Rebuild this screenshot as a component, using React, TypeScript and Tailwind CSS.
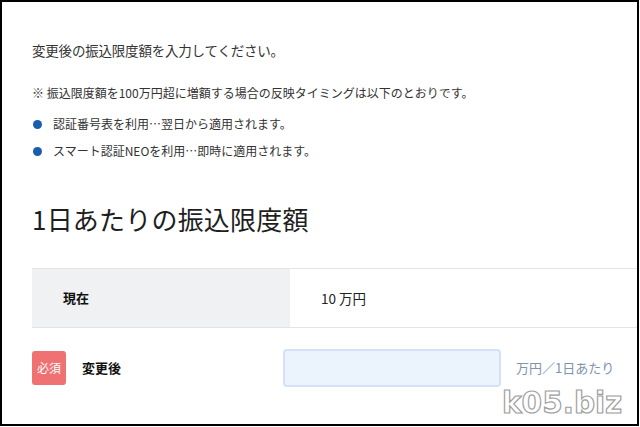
export default function App() {
  return (
    <div className="w-[640px] h-[427px] bg-white relative overflow-hidden" style={{ fontFamily: '"Noto Sans CJK JP", "Noto Sans", sans-serif' }}>
      <div className="w-[639px] h-[426px] border-2 border-black overflow-hidden">
        <div className="pl-[30px] pt-[38px] text-[#333]">
          {/* Intro */}
          <p className="text-[13.5px] leading-[20px] tracking-[-0.2px]">変更後の振込限度額を入力してください。</p>
          <p className="mt-[23px] text-[12px] leading-[20px]">※ 振込限度額を100万円超に増額する場合の反映タイミングは以下のとおりです。</p>
          <ul className="mt-[11px] flex flex-col gap-[7px] text-[12px] leading-[20px]">
            <li className="flex items-center">
              <span className="w-[9px] h-[9px] rounded-full bg-[#1a5cad] mr-[11px] ml-[1px]" />
              認証番号表を利用…翌日から適用されます。
            </li>
            <li className="flex items-center">
              <span className="w-[9px] h-[9px] rounded-full bg-[#1a5cad] mr-[11px] ml-[1px]" />
              スマート認証NEOを利用…即時に適用されます。
            </li>
          </ul>

          {/* Heading */}
          <h2 className="mt-[40px] text-[26px] leading-[36px] text-[#1e1e1e] font-normal tracking-[0.2px]">1日あたりの振込限度額</h2>

          {/* Current */}
          <div className="mt-[31px] flex h-[60px] border-y border-[#e2e4e6]">
            <div className="w-[258px] bg-[#f0f1f3] flex items-center pl-[31px] text-[13px] font-bold text-[#111]">現在</div>
            <div className="flex-1 flex items-center pl-[31px] text-[13.5px] text-[#222]">10 万円</div>
          </div>

          {/* After */}
          <div className="mt-[21px] flex items-center h-[38px]">
            <span className="w-[34px] h-[34px] rounded-[3px] bg-[#f07171] text-white text-[12px] flex items-center justify-center">必須</span>
            <span className="ml-[16px] w-[201px] text-[13px] font-bold text-[#111]">変更後</span>
            <div className="w-[218px] h-[38px] rounded-[4px] bg-[#ebf3fd] border-2 border-[#d3e3f5]" />
            <span className="ml-[15px] text-[13px] text-[#8094ab]">万円／1日あたり</span>
          </div>
        </div>
      </div>

      {/* watermark */}
      <div
        className="absolute left-[502px] top-[383px] text-[29.5px] leading-[41px] font-bold text-white [-webkit-text-stroke:1.2px_#a0a0a0]"
        style={{ fontFamily: '"DejaVu Sans", sans-serif' }}
      >
        k05.biz
      </div>
    </div>
  );
}
